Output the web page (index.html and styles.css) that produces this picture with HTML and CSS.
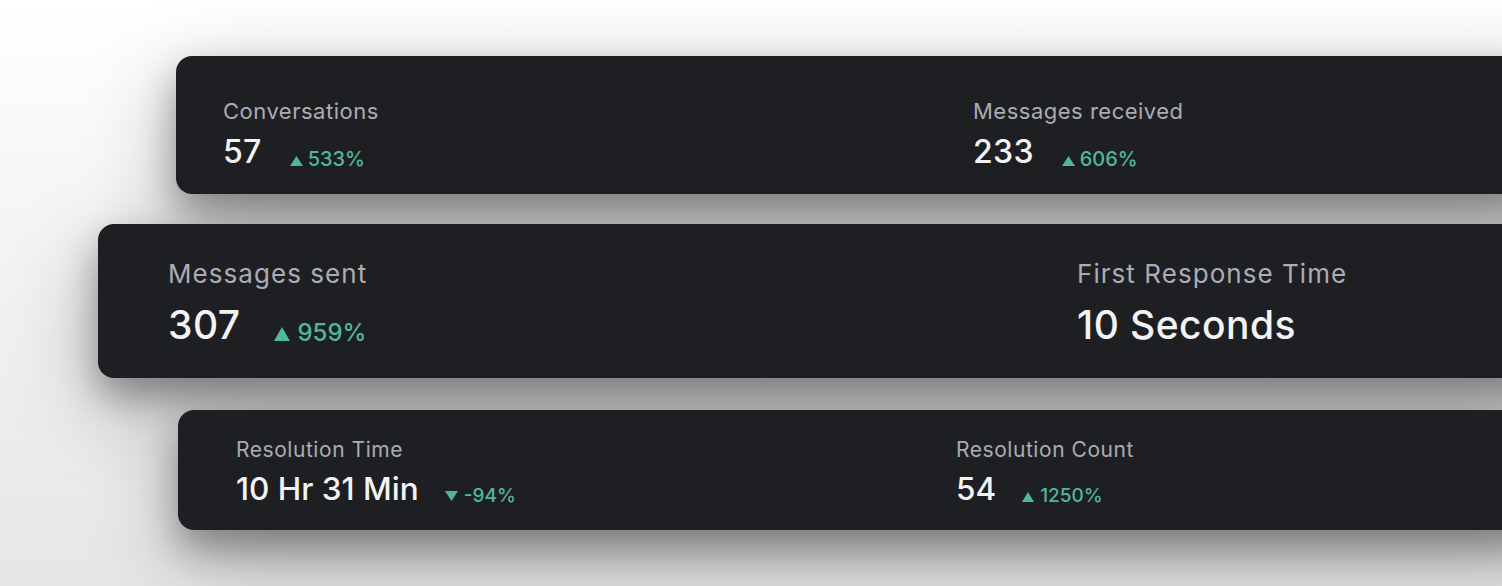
FILE: index.html
```html
<!DOCTYPE html>
<html lang="en">
<head>
<meta charset="utf-8">
<title>Metrics</title>
<link rel="stylesheet" href="styles.css">
</head>
<body>
<main class="stack">
  <section class="card card-a">
    <div class="metric">
      <div class="label">Conversations</div>
      <div class="value">57<span class="delta"><svg class="tri" viewBox="0 0 13 10" width="13" height="10"><path d="M6.5 0L13 10H0Z"/></svg>533%</span></div>
    </div>
    <div class="metric">
      <div class="label">Messages received</div>
      <div class="value">233<span class="delta"><svg class="tri" viewBox="0 0 13 10" width="13" height="10"><path d="M6.5 0L13 10H0Z"/></svg>606%</span></div>
    </div>
  </section>
  <section class="card card-b">
    <div class="metric">
      <div class="label">Messages sent</div>
      <div class="value">307<span class="delta"><svg class="tri" viewBox="0 0 16 14" width="16" height="14"><path d="M8 0L16 14H0Z"/></svg>959%</span></div>
    </div>
    <div class="metric">
      <div class="label">First Response Time</div>
      <div class="value">10 Seconds</div>
    </div>
  </section>
  <section class="card card-c">
    <div class="metric">
      <div class="label">Resolution Time</div>
      <div class="value">10 Hr 31 Min<span class="delta down"><svg class="tri" viewBox="0 0 13 10" width="13" height="10"><path d="M0 0H13L6.5 10Z"/></svg>-94%</span></div>
    </div>
    <div class="metric">
      <div class="label">Resolution Count</div>
      <div class="value">54<span class="delta"><svg class="tri" viewBox="0 0 12 10" width="12" height="10"><path d="M6 0L12 10H0Z"/></svg>1250%</span></div>
    </div>
  </section>
</main>
</body>
</html>
```

FILE: styles.css
```css
html, body {
  margin: 0;
  padding: 0;
}
body {
  width: 1502px;
  height: 586px;
  overflow: hidden;
  background: linear-gradient(180deg, #ffffff 0%, #f4f4f4 40%, #e6e6e6 100%);
  font-family: Inter, "Noto Sans", sans-serif;
}
.stack {
  display: flex;
  flex-direction: column;
  padding-top: 56px;
}
.card {
  background: #1e1f23;
  border-radius: 16px;
  margin-right: -60px;
  display: grid;
  box-sizing: border-box;
  box-shadow: 0 18px 36px rgba(0, 0, 0, 0.32), 0 28px 90px rgba(0, 0, 0, 0.28);
}
.label {
  color: #abadb2;
  line-height: 1;
  font-weight: 400;
  white-space: nowrap;
}
.value {
  color: #f3f3f4;
  line-height: 1;
  font-weight: 500;
  white-space: nowrap;
}
.delta {
  color: #4fb89b;
  font-weight: 500;
  letter-spacing: 0;
  vertical-align: -3px;
}
.tri {
  fill: #4fb89b;
  vertical-align: baseline;
}

.card-a {
  margin-left: 176px;
  height: 138px;
  padding: 44px 0 0 47px;
  grid-template-columns: 750px 1fr;
}
.card-a .label { font-size: 22px; letter-spacing: 0.5px; }
.card-a .value { font-size: 32px; margin-top: 14px; letter-spacing: 0.3px; }
.card-a .delta { font-size: 20px; margin-left: 28px; }
.card-a .tri { margin-right: 5px; }

.card-b {
  margin-top: 30px;
  margin-left: 98px;
  height: 154px;
  padding: 37px 0 0 70px;
  grid-template-columns: 909px 1fr;
}
.card-b .label { font-size: 26px; letter-spacing: 1.05px; }
.card-b .value { font-size: 39px; margin-top: 18px; letter-spacing: 0.45px; }
.card-b .delta { font-size: 24px; margin-left: 33px; vertical-align: -2px; }
.card-b .tri { margin-right: 8px; }

.card-c {
  margin-top: 32px;
  margin-left: 178px;
  height: 120px;
  padding: 29px 0 0 58px;
  grid-template-columns: 720px 1fr;
}
.card-c .label { font-size: 21px; letter-spacing: 0.55px; }
.card-c .value { font-size: 31.5px; margin-top: 13px; }
.card-c .delta { font-size: 19px; margin-left: 26px; vertical-align: -2px; }
.card-c .tri { margin-right: 6px; }
.card-c .down .tri { vertical-align: 1px; }
```
